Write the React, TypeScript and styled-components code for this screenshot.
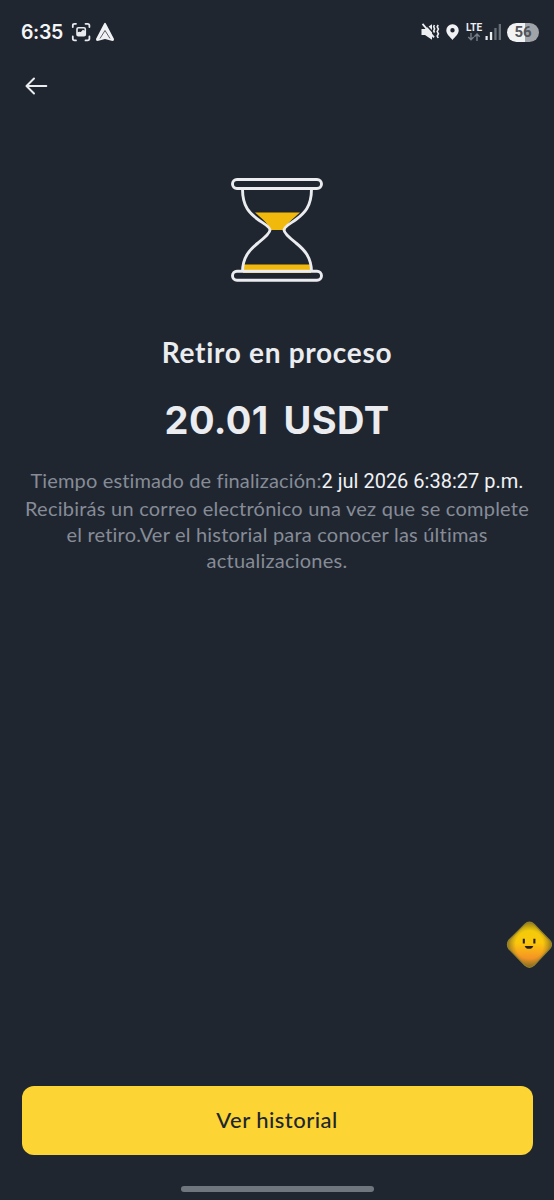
import React from 'react';
import styled, { createGlobalStyle } from 'styled-components';

const GlobalStyle = createGlobalStyle`
  * { box-sizing: border-box; }
  body { margin: 0; background: #202630; }
`;

const Screen = styled.main`
  position: relative;
  width: 554px;
  height: 1200px;
  display: flex;
  flex-direction: column;
  overflow: hidden;
  background: #202630;
  color: #eaecef;
  font-family: Lato, 'Open Sans', sans-serif;
`;

const StatusBar = styled.div`
  height: 64px;
  padding: 0 15px 0 21px;
  display: flex;
  align-items: center;
  justify-content: space-between;
`;

const StatusGroup = styled.div`
  display: flex;
  align-items: center;
`;

const Clock = styled.time`
  width: 50px;
  font: 600 19.5px/24px Inter, sans-serif;
  letter-spacing: -0.4px;
  color: #f4f5f7;
`;

const Battery = styled.span`
  width: 32px;
  height: 19px;
  margin-left: 5px;
  border-radius: 10px;
  background: linear-gradient(90deg, #f1f2f4 0 56%, #a0a4a9 56%);
  color: #50545b;
  font: 700 15px/19px Roboto, sans-serif;
  text-align: center;
`;

const Network = styled.span`
  width: 18px;
  height: 20px;
  margin-left: 6px;
  display: flex;
  flex-direction: column;
  align-items: center;
  color: #eceef0;
  font: 700 10px/11px Roboto, sans-serif;
`;

const NavBar = styled.nav`
  height: 44px;
  padding: 0 24px;
  display: flex;
  align-items: center;
`;

const BackButton = styled.button`
  padding: 0;
  border: 0;
  background: none;
  display: flex;
`;

const Content = styled.section`
  flex: 1;
  padding-top: 69px;
  display: flex;
  flex-direction: column;
  align-items: center;
`;

const Title = styled.h1`
  margin: 52px 0 0;
  font: 700 28px/34px Lato, sans-serif;
  letter-spacing: 0.7px;
  white-space: nowrap;
`;

const Amount = styled.p`
  margin: 27px 0 0;
  font: 700 38px/48px Inter, sans-serif;
  letter-spacing: 0.4px;
  word-spacing: 5.5px;
  white-space: nowrap;
`;

const Details = styled.div`
  margin-top: 22px;
  display: flex;
  flex-direction: column;
  align-items: center;
`;

const Line = styled.span<{ $height?: number; $spacing?: number }>`
  font-size: 20px;
  line-height: ${({ $height = 26 }) => $height}px;
  letter-spacing: ${({ $spacing = 0.24 }) => $spacing}px;
  white-space: nowrap;
  color: #868c97;
`;

const Moment = styled.time`
  font: 400 20px/28px Roboto, sans-serif;
  letter-spacing: 0;
  color: #f0f2f5;
`;

const Footer = styled.footer`
  padding: 0 21.5px 8px;
  display: flex;
  flex-direction: column;
  align-items: center;
`;

const HistoryButton = styled.button`
  width: 100%;
  height: 69px;
  padding: 0 0 2px;
  border: 0;
  border-radius: 12px;
  background: #fcd535;
  color: #202630;
  font: 500 22px/28px Lato, sans-serif;
  letter-spacing: 0.45px;
`;

const HomeIndicator = styled.div`
  width: 193px;
  height: 6px;
  margin-top: 31px;
  border-radius: 3px;
  background: #70767e;
`;

const Assistant = styled.button`
  position: absolute;
  right: 2px;
  top: 921px;
  padding: 0;
  border: 0;
  background: none;
  display: flex;
`;

const CaptureIcon = () => (
  <svg width="20" height="20" viewBox="0 0 20 20" fill="none" stroke="#e8eaed" strokeWidth="1.8" strokeLinecap="round">
    <path d="M1.8 5V3.500Q1.800 1.800 3.500 1.800H5M14.500 1.800h2q1.900 0 1.900 1.700V5M18.400 14.500v2q0 1.900-1.900 1.900h-2M5 18.400H3.500q-1.700 0-1.700-1.900v-2" />
    <rect x="6" y="5.700" width="8.300" height="8.100" rx="1.300" strokeWidth="1.600" />
    <path d="M6 13.500v-3l2.100-.8 1.700.4 2.100-2.300 2.400 1.300v4.400Z" fill="#e8eaed" stroke="none" />
  </svg>
);

const NavigatorGlyph = styled.svg`
  margin-left: 4px;
`;

const NavigatorIcon = () => (
  <NavigatorGlyph width="20" height="20" viewBox="0 0 20 20">
    <path d="M9.100 1.500q.9-1.300 1.800 0L19 17q.3 1.900-1.500 1.900L10 17l-7.500 1.900Q.7 18.900 1 17Z" fill="#f1f2f4" />
    <path d="m5 16.500 5-8 5 8" fill="none" stroke="#4a4f58" strokeWidth="0.900" />
  </NavigatorGlyph>
);

const MutedIcon = () => (
  <svg width="19" height="18" viewBox="0 0 19 18">
    <path d="M.500 6H4l7-4.800v15.600L4 12H.500Z" fill="#eceef0" />
    <path d="m4 .500 9 10" stroke="#202630" strokeWidth="1.500" />
    <path d="m1.500.800 11.500 13.500" stroke="#eceef0" strokeWidth="1.800" />
    <path d="m13.400 2-.7 1.800.9 2-.9 2.200.9 1.500M17.200 2l-1 1.800 1.200 2.200-1.200 2.500 1.200 2.300-1.200 2.300 1 1.900" fill="none" stroke="#eceef0" strokeWidth="1.600" />
  </svg>
);

const PinGlyph = styled.svg`
  margin-left: 6px;
`;

const PinIcon = () => (
  <PinGlyph width="13" height="16" viewBox="0 0 13 16">
    <path fillRule="evenodd" d="M6.500.200a6 6 0 0 0-6.200 6C.300 10 4 13 6.500 15.900 9 13 12.700 10 12.700 6.200a6 6 0 0 0-6.200-6Zm0 3.900a2.200 2.200 0 1 1 0 4.400 2.200 2.200 0 0 1 0-4.400Z" fill="#f1f2f4" />
  </PinGlyph>
);

const DataArrows = () => (
  <svg width="14" height="8" viewBox="0 0 14 8" fill="none" stroke="#777d85" strokeWidth="1.400">
    <path d="M4 0v6.500M1.300 4 4 6.800 6.700 4M10 8V1M7.300 3.700 10 1l2.700 2.700" />
  </svg>
);

const SignalGlyph = styled.svg`
  margin-left: 2px;
`;

const SignalIcon = () => (
  <SignalGlyph width="17" height="18" viewBox="0 0 17 18">
    <path d="M.500 13h2.200v4H.500zM4.900 9h2.300v8H4.900z" fill="#eceef0" />
    <path d="M9.300 5h2.300v12H9.300zM13.700 1H16v16h-2.300z" fill="#686e77" />
  </SignalGlyph>
);

const BackIcon = () => (
  <svg width="24" height="20" viewBox="0 0 24 20" fill="none" stroke="#eaecef" strokeWidth="2" strokeLinecap="round" strokeLinejoin="round">
    <path d="M22.300 10H3M10 2.500 2.500 10l7.500 7.500" />
  </svg>
);

const Hourglass = () => (
  <svg width="94" height="106" viewBox="0 0 94 106" fill="none">
    <path d="M25 35.500h45C63 42 56.500 46 55.500 53h-16C38.500 46 32 42 25 35.500Z" fill="#f0b90b" />
    <path d="M13 87.500h68V96H13Z" fill="#f0b90b" />
    <path d="M12.500 12C12.500 30 20 36.500 28 42.500c5 3.700 12 7 12 10.500s-7 9-12 13C20 72.500 12.500 80 12.500 95M81.500 12C81.500 30 74 36.500 66 42.500c-5 3.700-12 7-12 10.500s7 9 12 13c8 6.500 15.500 14 15.500 29" stroke="#eaecef" strokeWidth="2.900" />
    <rect x="2.500" y="2.500" width="89" height="9" rx="4.500" stroke="#eaecef" strokeWidth="2.900" />
    <rect x="2.500" y="94.300" width="89" height="9" rx="4.500" stroke="#eaecef" strokeWidth="2.900" />
  </svg>
);

const MascotIcon = () => (
  <svg width="46" height="48" viewBox="0 0 48 50">
    <defs>
      <linearGradient id="mascot" x1="0" y1="0" x2="0" y2="1">
        <stop offset="0.1" stopColor="#efcc08" />
        <stop offset="0.45" stopColor="#fcc80c" />
        <stop offset="0.8" stopColor="#f59425" />
        <stop offset="1" stopColor="#b98625" />
      </linearGradient>
      <radialGradient id="edge">
        <stop offset="0.62" stopColor="#92751e" stopOpacity="0" />
        <stop offset="1" stopColor="#776620" stopOpacity="0.8" />
      </radialGradient>
    </defs>
    <path d="M19.500 3.500q5-4.500 10 0L45.500 20q4 4.500 0 9L29.500 46q-5 4.500-10 0L3 29q-3-4.500 0-9Z" fill="url(#mascot)" />
    <path d="M19.500 3.500q5-4.500 10 0L45.500 20q4 4.500 0 9L29.500 46q-5 4.500-10 0L3 29q-3-4.500 0-9Z" fill="url(#edge)" stroke="#94812c" strokeWidth="1.300" />
    <path d="M17.500 18.500h2.200v5h-2.200zM28.500 18.500h2.200v5h-2.200zM19.500 26h9q-1 3-4.500 3t-4.500-3Z" fill="#262018" />
  </svg>
);

export default function App() {
  return (
    <Screen>
      <GlobalStyle />
      <StatusBar>
        <StatusGroup>
          <Clock>6:35</Clock>
          <CaptureIcon />
          <NavigatorIcon />
        </StatusGroup>
        <StatusGroup>
          <MutedIcon />
          <PinIcon />
          <Network>LTE<DataArrows /></Network>
          <SignalIcon />
          <Battery>56</Battery>
        </StatusGroup>
      </StatusBar>
      <NavBar>
        <BackButton aria-label="Volver"><BackIcon /></BackButton>
      </NavBar>
      <Content>
        <Hourglass />
        <Title>Retiro en proceso</Title>
        <Amount>20.01 USDT</Amount>
        <Details>
          <Line $height={29} $spacing={0.14}>Tiempo estimado de finalización:<Moment>2 jul 2026 6:38:27 p.m.</Moment></Line>
          <Line>Recibirás un correo electrónico una vez que se complete</Line>
          <Line $spacing={0.2}>el retiro.Ver el historial para conocer las últimas</Line>
          <Line>actualizaciones.</Line>
        </Details>
      </Content>
      <Footer>
        <HistoryButton>Ver historial</HistoryButton>
        <HomeIndicator />
      </Footer>
      <Assistant aria-label="Asistente"><MascotIcon /></Assistant>
    </Screen>
  );
}
